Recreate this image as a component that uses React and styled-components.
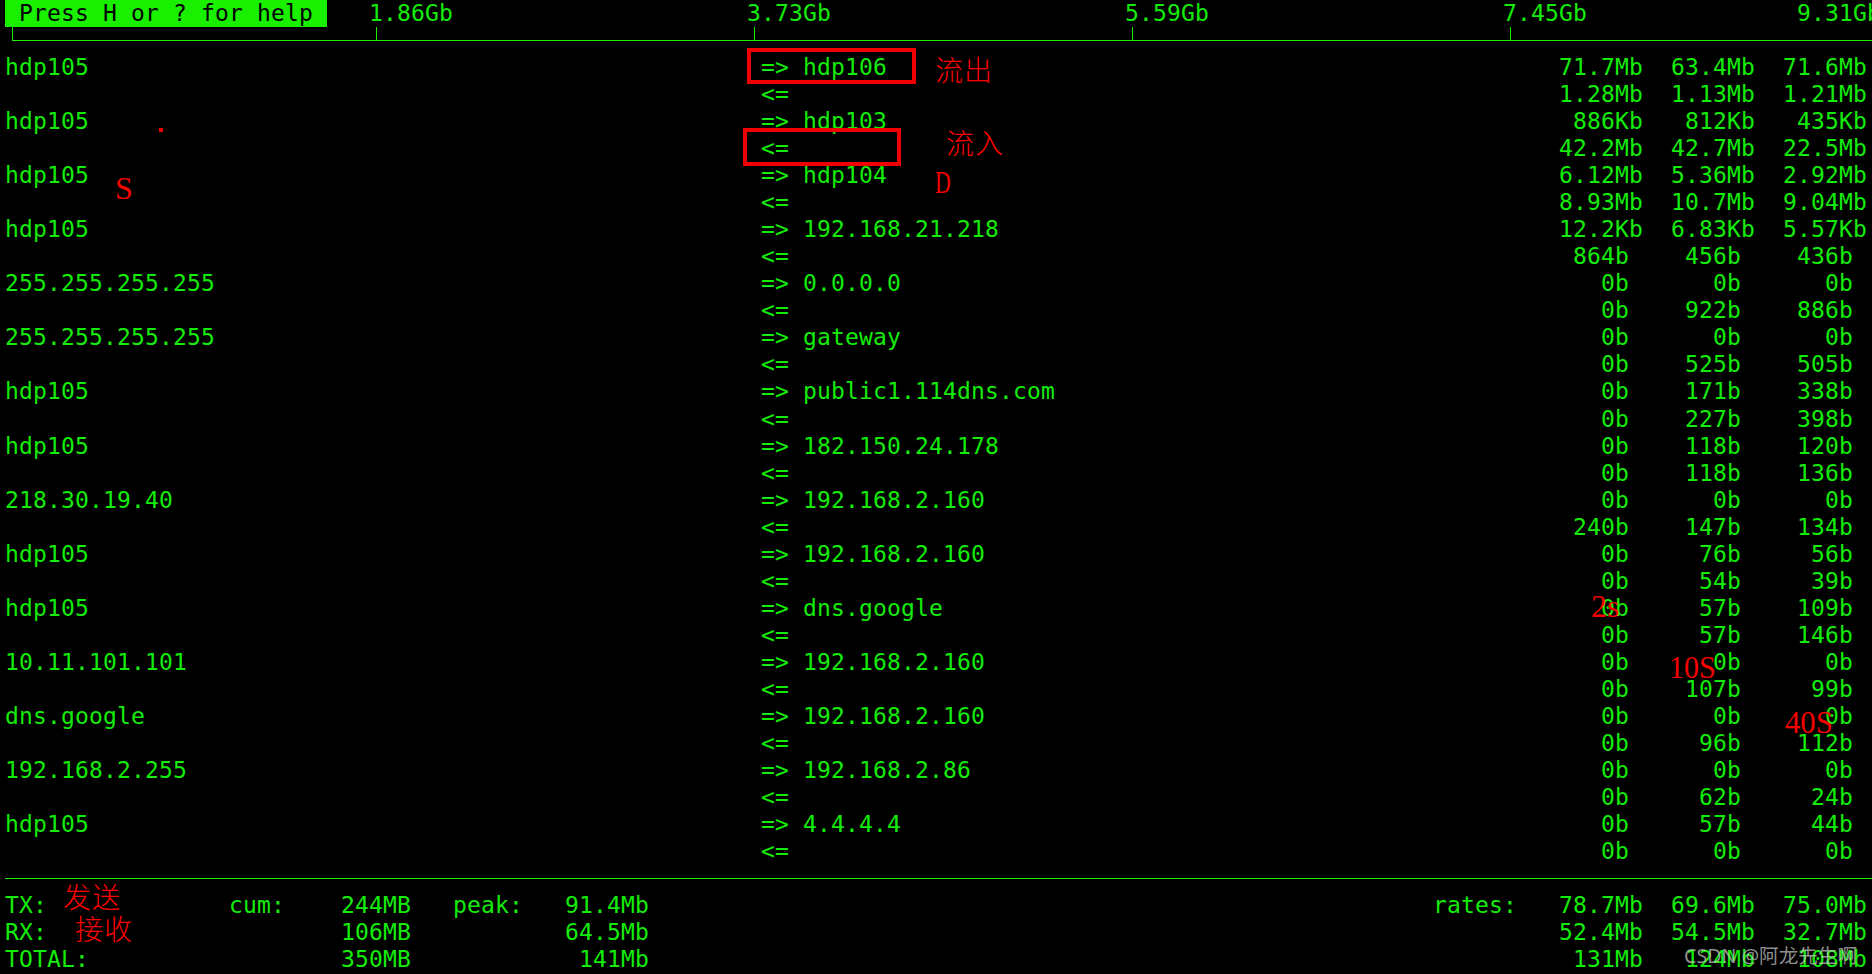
import React from "react"
import styled, { createGlobalStyle } from "styled-components"

const GlobalStyle = createGlobalStyle`
  html, body {
    margin: 0;
    height: 100%;
    background: #000;
    overflow: hidden;
  }
`

const Screen = styled.div`
  position: relative;
  width: 1872px;
  height: 974px;
  overflow: hidden;
  background: #000;
  color: #14ec0a;
  font-family: "DejaVu Sans Mono", monospace;
  font-size: 23px;
  letter-spacing: 0.154px;
  line-height: 27px;
  white-space: pre;
`

const ScaleBar = styled.div`
  display: flex;
  height: 27px;
  width: 1900px;
`

const HelpBadge = styled.div`
  width: 322px;
  margin-left: 5px;
  padding-left: 14px;
  box-sizing: border-box;
  background: #19f000;
  color: #000;
`

const ScaleLabel = styled.span`
  width: ${(p) => p.$cols * 14}px;
  flex: none;
`

const Ruler = styled.div`
  display: flex;
  height: 13px;
  margin: 0 0 13.1px 12px;
  border-bottom: 1px solid #19f000;
`

const Tick = styled.i`
  display: block;
  flex: none;
  width: ${(p) => p.$width}px;
  box-sizing: border-box;
  border-left: 1px solid #19f000;
`

const Row = styled.div`
  display: flex;
  height: 27.04px;
  padding: 0 5px;
`

const Host = styled.span`
  width: 756px;
  flex: none;
`

const Arrow = styled.span`
  width: 42px;
  flex: none;
`

const Dest = styled.span`
  flex: 1;
`

const Rate = styled.span`
  width: 112px;
  flex: none;
  box-sizing: border-box;
  text-align: right;
  padding-right: ${(p) => (p.$bare ? 14 : 0)}px;
`

const Divider = styled.div`
  height: 1px;
  margin: 12.7px 0 13px 5px;
  background: #19f000;
`

const TotalRow = styled.div`
  display: grid;
  grid-template-columns: 224px 182px 42px 196px 784px 98px 112px 112px 112px;
  height: 27px;
  padding-left: 5px;
`

const Pair = styled.span`
  display: flex;
  justify-content: space-between;
`

const Note = styled.span`
  position: absolute;
  left: ${(p) => p.$x}px;
  top: ${(p) => p.$y}px;
  color: #f60000;
  font-family: "Liberation Serif", serif;
  font-size: 32px;
  line-height: 1;
  letter-spacing: 0;
  transform: scaleX(${(p) => p.$squeeze || 1});
  transform-origin: left top;
`

const HanNote = styled(Note)`
  color: #ff0000;
  font-family: "Noto Sans CJK SC", sans-serif;
  font-weight: 300;
  font-size: 28px;
  letter-spacing: 1px;
`

const RedBox = styled.div`
  position: absolute;
  left: ${(p) => p.$x}px;
  top: ${(p) => p.$y}px;
  width: ${(p) => p.$w}px;
  height: ${(p) => p.$h}px;
  box-sizing: border-box;
  border: 4px solid #f00000;
`

const Dot = styled.i`
  position: absolute;
  left: 159px;
  top: 128px;
  width: 4px;
  height: 4px;
  background: #f00000;
`

const Watermark = styled.span`
  position: absolute;
  left: 1684px;
  top: 944px;
  color: rgba(200, 200, 200, 0.72);
  font-family: "Noto Sans", "Noto Sans CJK SC", sans-serif;
  font-size: 19.6px;
  letter-spacing: 0;
  line-height: 24px;
`

const flows = [
  ["hdp105", "hdp106", ["71.7Mb", "63.4Mb", "71.6Mb"], ["1.28Mb", "1.13Mb", "1.21Mb"]],
  ["hdp105", "hdp103", ["886Kb", "812Kb", "435Kb"], ["42.2Mb", "42.7Mb", "22.5Mb"]],
  ["hdp105", "hdp104", ["6.12Mb", "5.36Mb", "2.92Mb"], ["8.93Mb", "10.7Mb", "9.04Mb"]],
  ["hdp105", "192.168.21.218", ["12.2Kb", "6.83Kb", "5.57Kb"], ["864b", "456b", "436b"]],
  ["255.255.255.255", "0.0.0.0", ["0b", "0b", "0b"], ["0b", "922b", "886b"]],
  ["255.255.255.255", "gateway", ["0b", "0b", "0b"], ["0b", "525b", "505b"]],
  ["hdp105", "public1.114dns.com", ["0b", "171b", "338b"], ["0b", "227b", "398b"]],
  ["hdp105", "182.150.24.178", ["0b", "118b", "120b"], ["0b", "118b", "136b"]],
  ["218.30.19.40", "192.168.2.160", ["0b", "0b", "0b"], ["240b", "147b", "134b"]],
  ["hdp105", "192.168.2.160", ["0b", "76b", "56b"], ["0b", "54b", "39b"]],
  ["hdp105", "dns.google", ["0b", "57b", "109b"], ["0b", "57b", "146b"]],
  ["10.11.101.101", "192.168.2.160", ["0b", "0b", "0b"], ["0b", "107b", "99b"]],
  ["dns.google", "192.168.2.160", ["0b", "0b", "0b"], ["0b", "96b", "112b"]],
  ["192.168.2.255", "192.168.2.86", ["0b", "0b", "0b"], ["0b", "62b", "24b"]],
  ["hdp105", "4.4.4.4", ["0b", "57b", "44b"], ["0b", "0b", "0b"]],
]

const totals = [
  ["TX:", "cum:", "244MB", "peak:", "91.4Mb", "rates:", ["78.7Mb", "69.6Mb", "75.0Mb"]],
  ["RX:", "", "106MB", "", "64.5Mb", "", ["52.4Mb", "54.5Mb", "32.7Mb"]],
  ["TOTAL:", "", "350MB", "", "141Mb", "", ["131Mb", "124Mb", "108Mb"]],
]

const Rates = ({ values }) =>
  values.map((v, i) => (
    <Rate key={i} $bare={!/[KMG]b$/.test(v)}>
      {v}
    </Rate>
  ))

const App = () => {
  return (
    <Screen>
      <GlobalStyle />
      <ScaleBar>
        <HelpBadge>Press H or ? for help</HelpBadge>
        <ScaleLabel $cols={3} />
        <ScaleLabel $cols={27}>1.86Gb</ScaleLabel>
        <ScaleLabel $cols={27}>3.73Gb</ScaleLabel>
        <ScaleLabel $cols={27}>5.59Gb</ScaleLabel>
        <ScaleLabel $cols={21}>7.45Gb</ScaleLabel>
        <ScaleLabel $cols={6}>9.31Gb</ScaleLabel>
      </ScaleBar>
      <Ruler>
        <Tick $width={364} />
        <Tick $width={378} />
        <Tick $width={378} />
        <Tick $width={378} />
        <Tick $width={300} />
      </Ruler>
      {flows.map(([src, dst, out, back], i) => (
        <React.Fragment key={i}>
          <Row>
            <Host>{src}</Host>
            <Arrow>=&gt;</Arrow>
            <Dest>{dst}</Dest>
            <Rates values={out} />
          </Row>
          <Row>
            <Host />
            <Arrow>&lt;=</Arrow>
            <Dest />
            <Rates values={back} />
          </Row>
        </React.Fragment>
      ))}
      <Divider />
      {totals.map(([name, cum, sent, peak, top, rates, values]) => (
        <TotalRow key={name}>
          <span>{name}</span>
          <Pair>
            <span>{cum}</span>
            <span>{sent}</span>
          </Pair>
          <span />
          <Pair>
            <span>{peak}</span>
            <span>{top}</span>
          </Pair>
          <span />
          <span>{rates}</span>
          <Rates values={values} />
        </TotalRow>
      ))}

      <RedBox $x={747} $y={48} $w={169} $h={36} />
      <RedBox $x={743} $y={128} $w={158} $h={38} />
      <Dot />
      <Note $x={115} $y={172}>S</Note>
      <Note $x={935} $y={166} $squeeze={0.68}>D</Note>
      <HanNote $x={935} $y={55}>流出</HanNote>
      <HanNote $x={946} $y={128}>流入</HanNote>
      <HanNote $x={63} $y={882}>发送</HanNote>
      <HanNote $x={75} $y={914}>接收</HanNote>
      <Note $x={1591} $y={590}>2s</Note>
      <Note $x={1669} $y={651} $squeeze={0.94}>10S</Note>
      <Note $x={1785} $y={706} $squeeze={0.96}>40S</Note>
      <Watermark>CSDN @阿龙先生啊</Watermark>
    </Screen>
  )
}

export default App
